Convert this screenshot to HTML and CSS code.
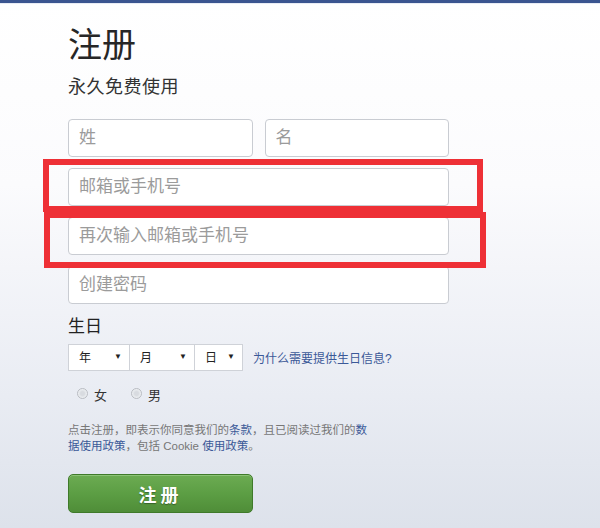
FILE: index.html
```html
<!DOCTYPE html>
<html lang="zh-CN">
<head>
    <meta charset="UTF-8">
    <meta name="viewport" content="width=device-width, initial-scale=1.0">
    <title>注册</title>
    <link rel="stylesheet" href="styles.css">
</head>
<body>
    <div class="topbar"></div>
    <main class="signup">
        <h1>注册</h1>
        <p class="tagline">永久免费使用</p>
        <form id="signup-form">
            <div class="name-row">
                <input type="text" class="field" placeholder="姓">
                <input type="text" class="field" placeholder="名">
            </div>
            <input type="text" class="field" placeholder="邮箱或手机号">
            <input type="text" class="field" placeholder="再次输入邮箱或手机号">
            <input type="password" class="field" placeholder="创建密码">

            <h3 class="birthday-title">生日</h3>
            <div class="birthday-row">
                <span class="pick pick-year"><select><option>年</option></select></span>
                <span class="pick pick-month"><select><option>月</option></select></span>
                <span class="pick pick-day"><select><option>日</option></select></span>
                <a href="#" class="why">为什么需要提供生日信息?</a>
            </div>

            <div class="gender">
                <label><input type="radio" name="sex"> 女</label>
                <label><input type="radio" name="sex"> 男</label>
            </div>

            <p class="terms">点击注册，即表示你同意我们的<a href="#">条款</a>，且已阅读过我们的<a href="#">数据使用政策</a>，包括 Cookie <a href="#">使用政策</a>。</p>

            <button type="submit" class="signup-button">注册</button>
        </form>
    </main>

    <!-- highlight frames over the email fields -->
    <div class="mark mark-email"></div>
    <div class="mark mark-confirm"></div>
</body>
</html>
```

FILE: styles.css
```css
html, body {
    height: 100%;
}
body {
    margin: 0;
    font-family: "Liberation Sans", "Noto Sans CJK SC", sans-serif;
    color: #1d2129;
    background: linear-gradient(to bottom, #ffffff 0%, #fbfbfd 35%, #e9ecf3 75%, #dde2eb 100%);
    overflow: hidden;
}
.topbar {
    height: 3px;
    background: #3b5590;
    border-bottom: 1px solid #e8ecf5;
}
.signup {
    width: 381px;
    margin-left: 68px;
    padding-top: 21px;
}
h1 {
    margin: 0;
    font-size: 34px;
    line-height: 40px;
    font-weight: normal;
    color: #262626;
}
.tagline {
    margin: 10px 0 0;
    font-size: 18px;
    line-height: 24px;
    color: #333;
    letter-spacing: 0.5px;
}
form {
    margin-top: 20px;
}
.name-row {
    display: flex;
    gap: 12px;
}
.field {
    display: block;
    box-sizing: border-box;
    width: 100%;
    height: 38px;
    margin: 0 0 11px;
    padding: 0 10px;
    border: 1px solid #c9ccd2;
    border-radius: 4px;
    background: #fff;
    font-family: inherit;
    font-size: 17px;
    color: #333;
}
.name-row .field {
    flex: 1;
    min-width: 0;
}
.field::placeholder {
    color: #9b9b9b;
}
.birthday-title {
    margin: 12px 0 0;
    font-size: 17px;
    line-height: 22px;
    font-weight: normal;
    color: #222;
}
.birthday-row {
    display: flex;
    align-items: center;
    margin-top: 6px;
}
.pick {
    position: relative;
    display: block;
    height: 27px;
}
.pick select {
    appearance: none;
    -webkit-appearance: none;
    box-sizing: border-box;
    width: 100%;
    height: 27px;
    margin: 0;
    padding: 0 0 0 10px;
    border: 1px solid #cfd2d8;
    border-radius: 0;
    background: #fff;
    font-family: inherit;
    font-size: 12px;
    color: #222;
}
.pick::after {
    content: "\25BC";
    position: absolute;
    right: 8px;
    top: 8px;
    font-size: 8px;
    line-height: 10px;
    color: #222;
    pointer-events: none;
}
.pick-year { width: 62px; }
.pick-month { width: 65px; }
.pick-day { width: 48px; }
.pick-month select, .pick-day select {
    border-left: none;
}
.why {
    margin-left: 10px;
    font-size: 12px;
    color: #3b5998;
    text-decoration: none;
}
.gender {
    display: flex;
    gap: 24px;
    margin-top: 17px;
    padding-left: 9px;
    font-size: 13px;
    line-height: 16px;
    color: #333;
}
.gender label {
    display: flex;
    align-items: center;
}
.gender input {
    appearance: none;
    -webkit-appearance: none;
    width: 11px;
    height: 11px;
    margin: 0 6px 5px 0;
    border: 1px solid #b9bcc2;
    border-radius: 50%;
    background: radial-gradient(circle, #d8dbe0 30%, #eef0f3 70%);
}
.terms {
    width: 305px;
    margin: 18px 0 0;
    font-size: 11.5px;
    line-height: 16px;
    color: #777;
}
.terms a {
    color: #3b5998;
    text-decoration: none;
}
.signup-button {
    display: block;
    box-sizing: border-box;
    width: 185px;
    height: 39px;
    margin-top: 20px;
    border: 1px solid #3f7a2a;
    border-radius: 5px;
    background: linear-gradient(to bottom, #6cab52 0%, #5c9e44 50%, #4f8d38 100%);
    box-shadow: inset 0 1px 0 #8cc276;
    font-family: "Noto Sans CJK SC", sans-serif;
    font-size: 18px;
    font-weight: bold;
    letter-spacing: 4px;
    color: #fff;
    text-shadow: 0 1px 1px rgba(0, 0, 0, 0.35);
    cursor: pointer;
}

/* red frames drawn over the form */
.mark {
    position: absolute;
    box-sizing: border-box;
    border: 6px solid #ee3036;
}
.mark-email {
    left: 43px;
    top: 159px;
    width: 440px;
    height: 53px;
}
.mark-confirm {
    left: 44px;
    top: 212px;
    width: 442px;
    height: 56px;
}
```
